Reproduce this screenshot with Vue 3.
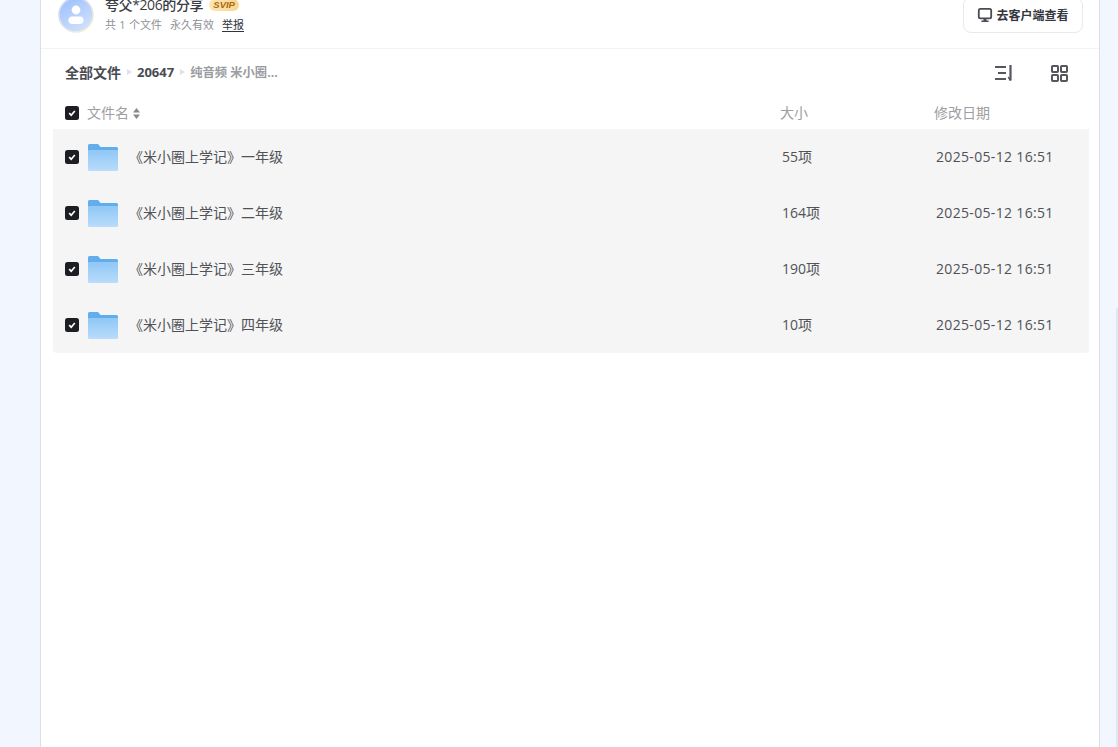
<script setup>
const rows = [
  { name: '《米小圈上学记》一年级', size: '55项' },
  { name: '《米小圈上学记》二年级', size: '164项' },
  { name: '《米小圈上学记》三年级', size: '190项' },
  { name: '《米小圈上学记》四年级', size: '10项' },
]
</script>

<template>
  <div class="page">
    <main class="card">
      <header class="head">
        <div class="avatar">
          <svg width="36" height="36" viewBox="0 0 36 36">
            <defs>
              <linearGradient id="av" x1="0.2" y1="0" x2="0.8" y2="1">
                <stop offset="0" stop-color="#9dc0fb" />
                <stop offset="1" stop-color="#d3e4fd" />
              </linearGradient>
              <linearGradient id="ring" x1="0.2" y1="0" x2="0.8" y2="1">
                <stop offset="0" stop-color="#c4d8fb" />
                <stop offset="1" stop-color="#f8edcf" />
              </linearGradient>
            </defs>
            <circle cx="18" cy="18" r="17" fill="url(#av)" stroke="url(#ring)" stroke-width="1.600" />
            <circle cx="18" cy="13" r="4.4" fill="#fff" />
            <rect x="10.5" y="19.5" width="15" height="7.5" rx="3.7" fill="#fff" />
          </svg>
        </div>
        <div class="who">
          <div class="name-line">
            <span class="name">夸父*206的分享</span>
            <span class="svip">SVIP</span>
          </div>
          <div class="meta">
            <span class="count">共 1 个文件</span>
            <span>永久有效</span>
            <a class="report">举报</a>
          </div>
        </div>
        <button class="client">
          <svg width="16" height="16" viewBox="0 0 16 16" fill="none">
            <rect x="1.8" y="1.8" width="12.4" height="9.6" rx="1.6" stroke="#4a4c52" stroke-width="1.8" />
            <path d="M5 14.200h6" stroke="#4a4c52" stroke-width="1.600" stroke-linecap="round" />
            <path d="M6.500 11.500h3v2.500h-3z" fill="#4a4c52" />
          </svg>
          去客户端查看
        </button>
      </header>

      <div class="crumbs">
        <nav class="path">
          <b class="c1">全部文件</b>
          <i class="tri"></i>
          <b class="c1 num">20647</b>
          <i class="tri"></i>
          <b class="c2">纯音频 米小圈...</b>
        </nav>
        <div class="tools">
          <svg width="20" height="18" viewBox="0 0 20 18" fill="none" stroke="#55575c" stroke-width="2">
            <path d="M0 3h11M3 9h8M0 15h11" />
            <path d="M15.500 1v15.500" stroke-width="2.200" />
            <path d="M15.500 16.500l-2.200-3.500" stroke-width="1.600" />
          </svg>
          <svg width="17" height="17" viewBox="0 0 17 17" fill="none" stroke="#55575c" stroke-width="2">
            <rect x="1" y="1" width="6" height="6" rx="0.8" />
            <rect x="10" y="1" width="6" height="6" rx="0.8" />
            <rect x="1" y="10" width="6" height="6" rx="0.8" />
            <rect x="10" y="10" width="6" height="6" rx="0.8" />
          </svg>
        </div>
      </div>

      <div class="list">
        <div class="thead">
          <span class="check"><svg width="10" height="10" viewBox="0 0 10 10"><path d="M2.200 5.200l2 2 3.600-4.200" fill="none" stroke="#fff" stroke-width="1.700" /></svg></span>
          <span class="col-name th">文件名
            <svg width="7" height="11" viewBox="0 0 7 11" fill="#8a8a8e"><path d="M3.500 0L7 4.500H0zM3.500 11L0 6.500h7z" /></svg>
          </span>
          <span class="col-size th">大小</span>
          <span class="col-date th">修改日期</span>
        </div>
        <div v-for="r in rows" :key="r.name" class="row">
          <span class="check"><svg width="10" height="10" viewBox="0 0 10 10"><path d="M2.200 5.200l2 2 3.600-4.200" fill="none" stroke="#fff" stroke-width="1.700" /></svg></span>
          <span class="col-name cell">
            <svg class="folder" width="30" height="27" viewBox="0 0 30 27">
              <defs>
                <linearGradient id="fd" x1="0" y1="0" x2="0" y2="1">
                  <stop offset="0" stop-color="#8fc7f5" />
                  <stop offset="1" stop-color="#b9dcfb" />
                </linearGradient>
              </defs>
              <path d="M0 1.500A1.500 1.500 0 0 1 1.500 0h8.500l2.500 3h16A1.500 1.500 0 0 1 30 4.500v5H0z" fill="#62aeed" />
              <path d="M0 6h30V25.500a1.500 1.500 0 0 1-1.500 1.500H1.500A1.500 1.500 0 0 1 0 25.500z" fill="url(#fd)" />
            </svg>
            <span class="fname">{{ r.name }}</span>
          </span>
          <span class="col-size cell sz">{{ r.size }}</span>
          <span class="col-date cell dt">2025-05-12 16:51</span>
        </div>
      </div>
    </main>
    <div class="edge"></div>
  </div>
</template>

<style>
html, body { margin: 0; overflow: hidden; background: #f1f6ff; }
</style>

<style scoped>
.page {
  position: relative;
  height: 747px;
  overflow: hidden;
  background: #f1f6ff;
  font-family: "Open Sans", "Noto Sans CJK SC", sans-serif;
  padding-left: 40px;
  box-sizing: border-box;
}
.edge {
  position: absolute;
  right: 0;
  top: 308px;
  width: 2px;
  height: 439px;
  background: #dbe6f6;
  border-radius: 2px 0 0 0;
}
.card {
  width: 1060px;
  height: 800px;
  margin-top: -32px;
  background: #fff;
  border-left: 1px solid #dcdee4;
  border-right: 1px solid #dcdee4;
  box-sizing: border-box;
}
.head {
  height: 81px;
  border-bottom: 1px solid #f2f3f5;
  box-sizing: border-box;
  display: flex;
  align-items: flex-start;
  padding: 29px 16px 0 17px;
}
.avatar { width: 36px; height: 36px; }
.who { margin-left: 11px; margin-top: -3px; flex: 1; }
.name-line { display: flex; align-items: center; height: 20px; gap: 6px; }
.name { font-size: 14px; color: #3a3d44; font-weight: 500; letter-spacing: -0.4px; }
.svip {
  width: 30px;
  height: 12px;
  border-radius: 6px;
  background: linear-gradient(90deg, #fde6b4, #f9d68f);
  color: #a76a10;
  font: italic 700 9.500px/12px "Liberation Sans", sans-serif;
  text-align: center;
  margin-top: 1px;
}
.meta {
  display: flex;
  gap: 8px;
  margin-top: 3px;
  font-size: 11px;
  line-height: 16px;
  color: #8f9197;
}
.count { word-spacing: 0.5px; }
.report { color: #2f3340; text-decoration: underline; text-underline-offset: 2px; }
.client {
  width: 120px;
  height: 36px;
  border: 1px solid #e8e9ec;
  border-radius: 8px;
  background: #fff;
  color: #33363d;
  font: 700 12px "Open Sans", "Noto Sans CJK SC", sans-serif;
  display: flex;
  align-items: center;
  justify-content: center;
  gap: 3px;
  padding: 0;
}
.crumbs {
  height: 48px;
  display: flex;
  align-items: center;
  justify-content: space-between;
  padding: 0 31px 2px 24px;
  box-sizing: border-box;
}
.path { display: flex; align-items: center; font-size: 13px; }
.path b { font-weight: 700; }
.c1 { color: #484b52; font-size: 14px; }
.c1.num { font-size: 13px; }
.c2 { color: #9a9ca1; font-size: 12.300px; }
.tri {
  width: 0;
  height: 0;
  margin: 0 5px 0 6px;
  border-left: 5px solid #e0e1e4;
  border-top: 3.500px solid transparent;
  border-bottom: 3.500px solid transparent;
}
.tools { display: flex; align-items: center; gap: 36px; margin-top: 2px; }
.list { padding: 0 10px 0 12px; }
.thead, .row {
  display: grid;
  grid-template-columns: 35px 692px 154px 1fr;
  align-items: center;
}
.thead { height: 32px; align-items: start; }
.thead > * { margin-top: 9px; }
.row { height: 56px; background: #f5f5f5; }
.row:last-child { border-radius: 0 0 4px 4px; }
.check {
  width: 14px;
  height: 14px;
  border-radius: 2.500px;
  background: #1d1e23;
  display: flex;
  align-items: center;
  justify-content: center;
  margin-left: 12px;
}
.th { font-size: 14px; line-height: 14px; color: #9d9ea2; }
.col-name { display: flex; align-items: center; }
.col-name.th { gap: 4px; margin-left: -1px; }
.cell { font-size: 14px; color: #505257; padding-bottom: 2px; }
.folder { flex: none; margin-top: 2px; }
.fname { margin-left: 11px; }
.sz { padding-left: 2px; }
.dt { padding-left: 2px; letter-spacing: 0.33px; }
</style>
